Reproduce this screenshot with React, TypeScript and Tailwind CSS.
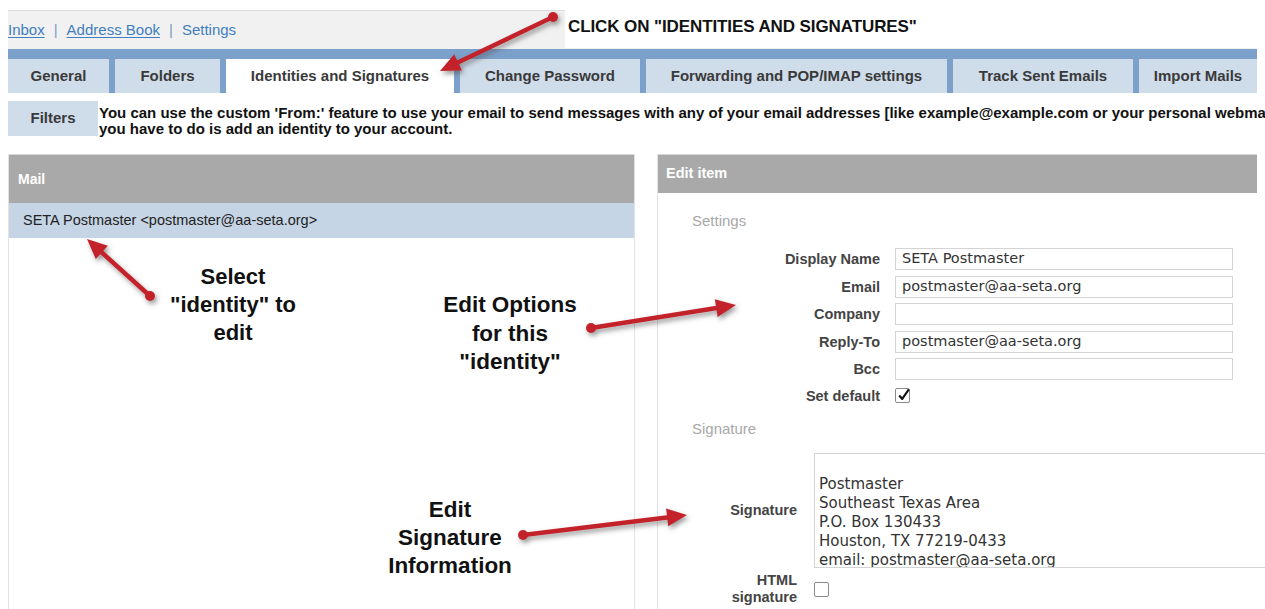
import React from "react";

type Pt = [number, number];

const tabs: { label: string; w: string; active?: boolean }[] = [
  { label: "General", w: "w-[101px]" },
  { label: "Folders", w: "w-[105px]" },
  { label: "Identities and Signatures", w: "w-[228px]", active: true },
  { label: "Change Password", w: "w-[180px]" },
  { label: "Forwarding and POP/IMAP settings", w: "w-[301px]" },
  { label: "Track Sent Emails", w: "w-[180px]" },
  { label: "Import Mails", w: "w-[118px]" },
];

const fields: { label: string; value: string }[] = [
  { label: "Display Name", value: "SETA Postmaster" },
  { label: "Email", value: "postmaster@aa-seta.org" },
  { label: "Company", value: "" },
  { label: "Reply-To", value: "postmaster@aa-seta.org" },
  { label: "Bcc", value: "" },
];

const signature = [
  "",
  "Postmaster",
  "Southeast Texas Area",
  "P.O. Box 130433",
  "Houston, TX 77219-0433",
  "email: postmaster@aa-seta.org",
];

// Red pointer arrow: round dot at the tail, filled head at the tip
function Arrow({ from, to }: { from: Pt; to: Pt }) {
  const dx = to[0] - from[0];
  const dy = to[1] - from[1];
  const len = Math.hypot(dx, dy);
  const ux = dx / len;
  const uy = dy / len;
  const nx = -uy;
  const ny = ux;
  const headLen = 20;
  const headHalf = 9;
  const bx = to[0] - ux * headLen;
  const by = to[1] - uy * headLen;
  const head = `${to[0]},${to[1]} ${bx + nx * headHalf},${by + ny * headHalf} ${bx - nx * headHalf},${by - ny * headHalf}`;
  return (
    <g filter="url(#arrowShadow)">
      <line x1={from[0]} y1={from[1]} x2={bx + ux * 2} y2={by + uy * 2} stroke="#c3222b" strokeWidth={4.5} strokeLinecap="round" />
      <circle cx={from[0]} cy={from[1]} r={5} fill="#c3222b" />
      <polygon points={head} fill="#c3222b" />
    </g>
  );
}

function CheckBox({ checked }: { checked?: boolean }) {
  return (
    <span className="relative inline-block w-[15px] h-[15px] border border-[#8a8a8a] bg-white rounded-[2px]">
      {checked && (
        <svg viewBox="0 0 16 16" className="absolute left-[1px] top-[-2px] w-[14px] h-[16px]">
          <path d="M2.5 8.5 L6 12.5 L13.5 1.5" fill="none" stroke="#111" strokeWidth={2.4} strokeLinejoin="round" />
        </svg>
      )}
    </span>
  );
}

export default function App() {
  return (
    <div className="relative w-[1265px] h-[609px] overflow-hidden bg-white font-['Liberation_Sans',Arial,sans-serif] flex flex-col">
      {/* top navigation strip */}
      <div className="pt-[10px] px-2">
        <div className="h-[39px] bg-[#f1f1f1] border-t border-[#dedede] flex items-center text-[15px] text-[#3f7fc0]">
          <span className="underline underline-offset-2">Inbox</span>
          <span className="mx-[9px] text-[#7d9cc0]">|</span>
          <span className="underline underline-offset-2">Address Book</span>
          <span className="mx-[9px] text-[#7d9cc0]">|</span>
          <span>Settings</span>
        </div>
      </div>

      {/* settings tabs */}
      <div className="mx-2 h-[10px] bg-[#7ba0c9]" />
      <div className="mx-2 flex gap-[6px] bg-[#7ba0c9]">
        {tabs.map((t) => (
          <div
            key={t.label}
            className={`${t.w} h-[34px] flex items-center justify-center text-[15px] font-bold text-[#3a3a3a] whitespace-nowrap ${
              t.active ? "bg-white" : "bg-[#cfdcea]"
            }`}
          >
            {t.label}
          </div>
        ))}
      </div>

      {/* secondary tab + intro text */}
      <div className="mt-[8px] ml-2 flex items-start">
        <div className="w-[90px] h-[35px] shrink-0 bg-[#cfdcea] flex items-center justify-center text-[15px] font-bold text-[#3a3a3a]">
          Filters
        </div>
        <div className="pl-[1px] pt-[4px] text-[15px] leading-[16px] font-bold text-[#111] whitespace-nowrap overflow-hidden">
          <div>
            You can use the custom 'From:' feature to use your email to send messages with any of your email addresses [like example@example.com or your personal webmail address], all
          </div>
          <div>you have to do is add an identity to your account.</div>
        </div>
      </div>

      {/* panels */}
      <div className="mt-[17px] flex flex-1 min-h-0">
        {/* identity list */}
        <div className="ml-2 w-[627px] shrink-0 border-x border-[#e2e2e2]">
          <div className="h-[49px] bg-[#a9a9a9] border-t border-[#d6d6d6] pl-[9px] flex items-center text-[14px] font-bold text-white">
            Mail
          </div>
          <div className="h-[35px] bg-[#c5d5e5] pl-[14px] flex items-center text-[14.5px] text-[#222]">
            SETA Postmaster &lt;postmaster@aa-seta.org&gt;
          </div>
        </div>

        {/* edit form */}
        <div className="ml-[22px] w-[620px] shrink-0 border-l border-[#e2e2e2]">
          <div className="w-[599px] h-[39px] bg-[#a9a9a9] border-t border-[#d6d6d6] pl-[8px] flex items-center text-[14.5px] font-bold text-white">
            Edit item
          </div>
          <div className="pl-[34px] mt-[19px] text-[15px] leading-[18px] text-[#a8a8a8]">Settings</div>

          <div className="mt-[18px] grid grid-cols-[222px_338px] gap-x-[15px] gap-y-[5.5px] items-center">
            {fields.map((f) => (
              <React.Fragment key={f.label}>
                <div className="text-right text-[14.5px] leading-[18px] font-bold text-[#444]">{f.label}</div>
                <div className="h-[22px] border border-[#d4d4d4] bg-white pl-[6px] flex items-center text-[14.5px] text-[#333] font-['DejaVu_Sans',Verdana,sans-serif]">
                  {f.value}
                </div>
              </React.Fragment>
            ))}
            <div className="text-right text-[14.5px] leading-[18px] font-bold text-[#444]">Set default</div>
            <div className="h-[20px] flex items-center">
              <CheckBox checked />
            </div>
          </div>

          <div className="pl-[34px] mt-[14px] text-[15px] leading-[18px] text-[#a8a8a8]">Signature</div>

          <div className="mt-[15px] grid grid-cols-[139px_600px] gap-x-[17px] gap-y-[4px]">
            <div className="self-center text-right text-[14.5px] leading-[18px] font-bold text-[#444]">Signature</div>
            <div className="h-[115px] border border-[#d4d4d4] bg-white pl-[4px] pt-[2px] overflow-hidden text-[15px] leading-[19px] text-[#333] font-['DejaVu_Sans',Verdana,sans-serif] whitespace-pre">
              {signature.map((line, i) => (
                <div key={i} className="h-[19px]">
                  {line}
                </div>
              ))}
            </div>
            <div className="text-right text-[14.5px] leading-[17px] font-bold text-[#444]">
              HTML
              <br />
              signature
            </div>
            <div className="pt-[10px] flex items-start">
              <CheckBox />
            </div>
          </div>
        </div>
      </div>

      {/* callout label */}
      <div className="absolute left-[565px] top-[5px] w-[695px] h-[43px] bg-white flex items-center pl-[3px] text-[17px] font-bold text-[#111] tracking-[-0.1px]">
        CLICK ON "IDENTITIES AND SIGNATURES"
      </div>

      {/* pointer arrows */}
      <svg className="absolute inset-0 pointer-events-none" width={1265} height={609} viewBox="0 0 1265 609">
        <defs>
          <filter id="arrowShadow" x="-20%" y="-20%" width="140%" height="140%">
            <feDropShadow dx="2" dy="3" stdDeviation="2.4" floodColor="#555" floodOpacity="0.6" />
          </filter>
        </defs>
        <Arrow from={[553, 17]} to={[440, 71]} />
        <Arrow from={[150, 296]} to={[87, 239]} />
        <Arrow from={[591, 328]} to={[736, 305]} />
        <Arrow from={[523, 535]} to={[687, 515]} />
      </svg>

      {/* annotation captions */}
      <div className="absolute left-[153px] top-[263px] w-[160px] text-center text-[22px] leading-[28px] font-bold text-[#111]">
        Select
        <br />
        "identity" to
        <br />
        edit
      </div>
      <div className="absolute left-[425px] top-[291px] w-[170px] text-center text-[22.5px] leading-[28.5px] font-bold text-[#111]">
        Edit Options
        <br />
        for this
        <br />
        "identity"
      </div>
      <div className="absolute left-[370px] top-[496px] w-[160px] text-center text-[22.5px] leading-[28px] font-bold text-[#111]">
        Edit
        <br />
        Signature
        <br />
        Information
      </div>
    </div>
  );
}
